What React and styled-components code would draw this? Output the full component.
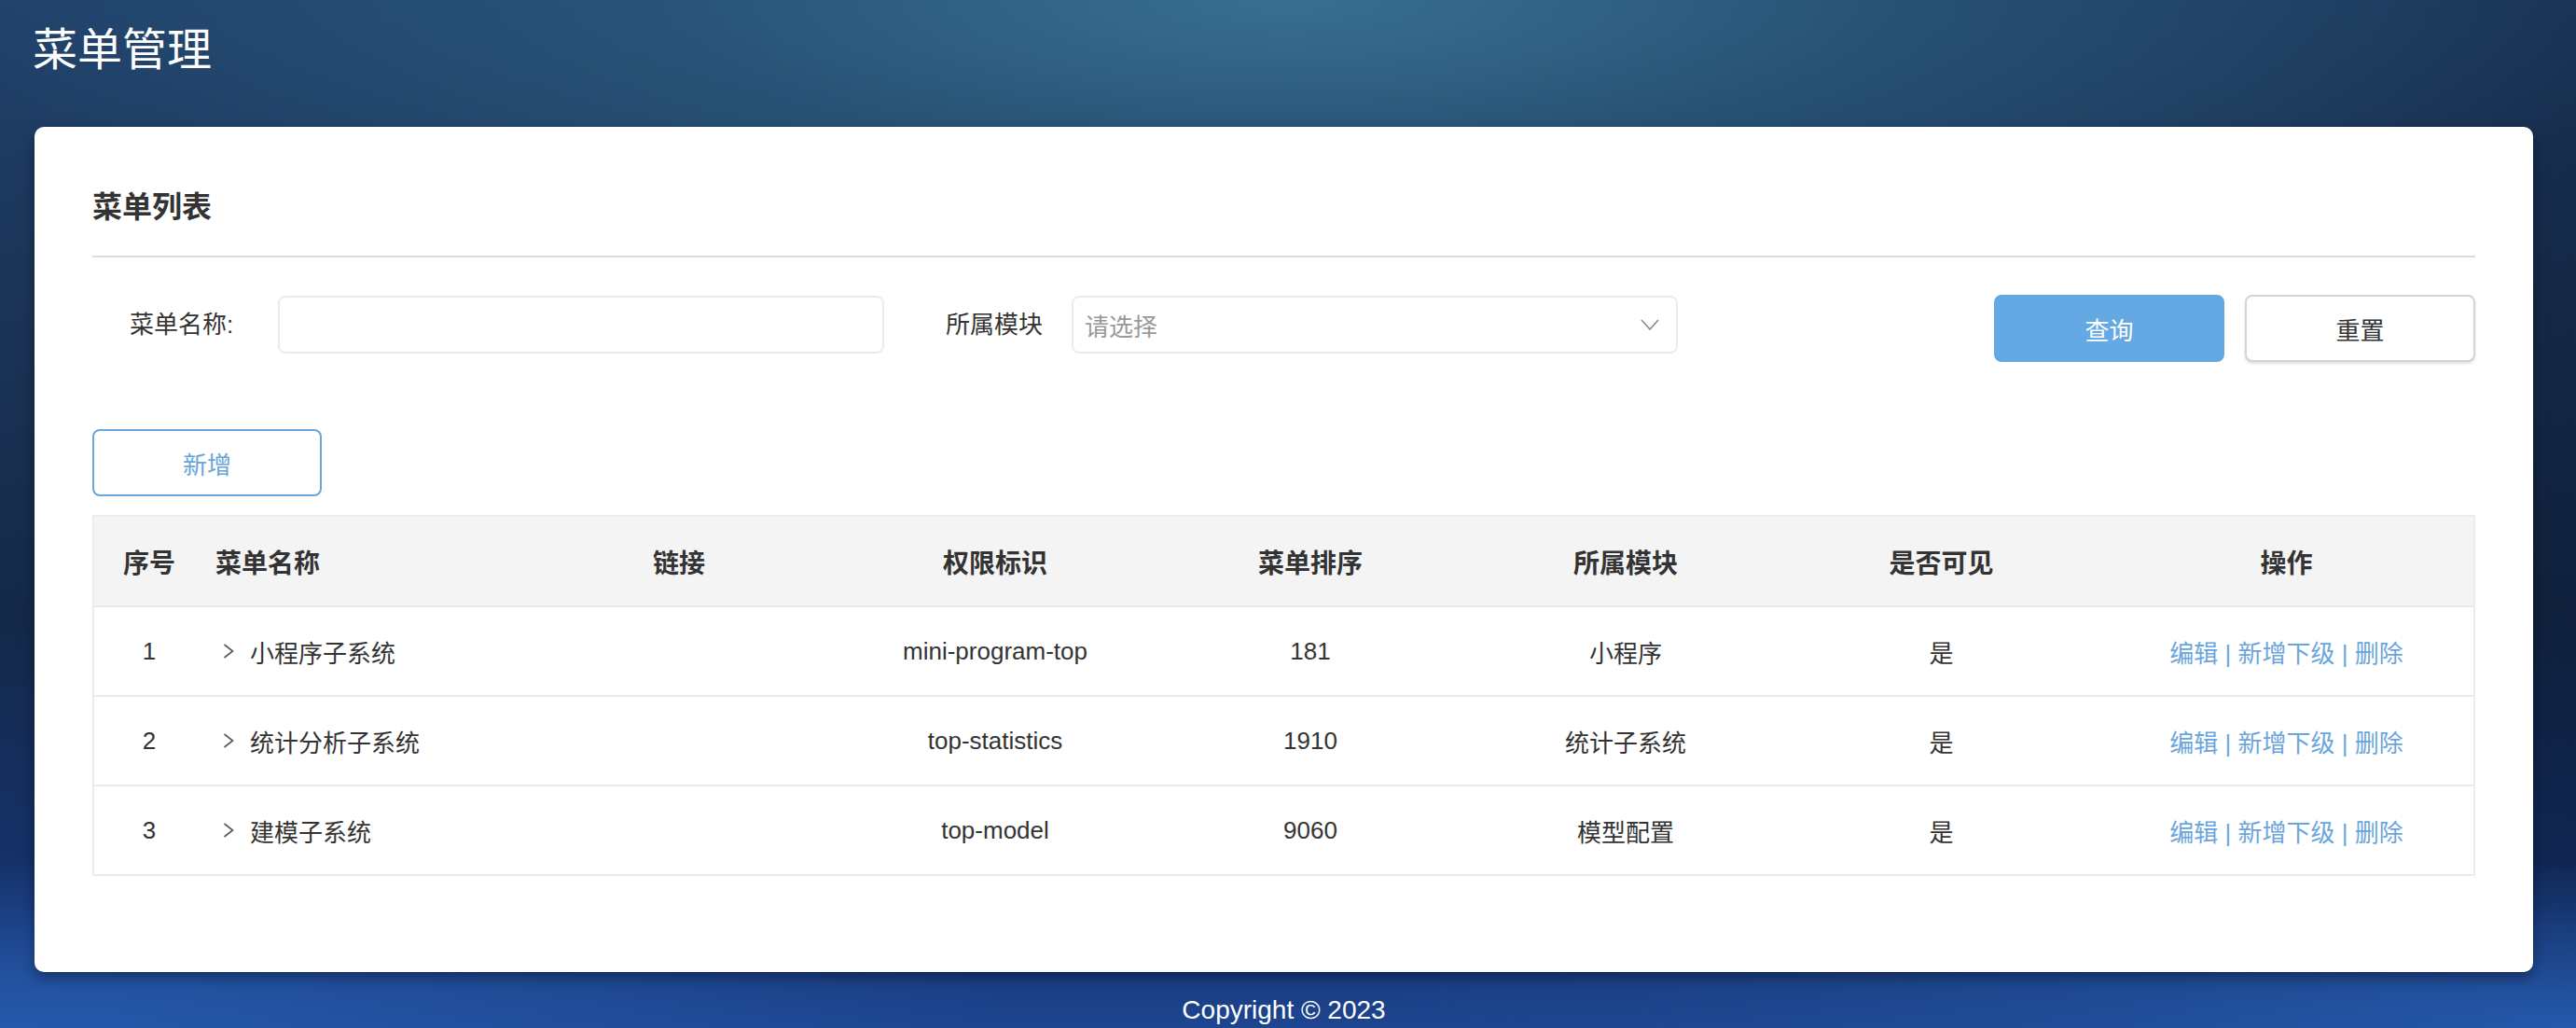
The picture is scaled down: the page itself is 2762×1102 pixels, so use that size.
import React from "react";
import styled, { createGlobalStyle } from "styled-components";

const GlobalStyle = createGlobalStyle`
  html, body {
    margin: 0;
    padding: 0;
  }
  body {
    font-family: "Liberation Sans", "Noto Sans CJK SC", sans-serif;
    overflow: hidden;
  }
`;

const Page = styled.div`
  width: 2762px;
  height: 1102px;
  display: flex;
  flex-direction: column;
  background:
    radial-gradient(ellipse 1500px 380px at 1380px 0px, rgba(58, 114, 146, 0.95) 0%, rgba(46, 96, 128, 0.6) 45%, rgba(40, 80, 110, 0) 100%),
    radial-gradient(ellipse 1100px 180px at 0px 1102px, #2659ab 0%, rgba(36, 85, 165, 0) 100%),
    radial-gradient(ellipse 1300px 180px at 2762px 1102px, #2559ac 0%, rgba(36, 85, 165, 0) 100%),
    linear-gradient(90deg, rgba(0, 0, 0, 0) 55%, rgba(5, 12, 30, 0.3) 100%),
    linear-gradient(180deg, #20406a 0%, #1b3457 30%, #142949 60%, #15326e 88%, #1d4590 100%);
`;

const TopBar = styled.header`
  flex: none;
  height: 136px;
  box-sizing: border-box;
  padding: 22px 0 0 35px;
`;

const PageTitle = styled.h1`
  margin: 0;
  font-size: 48px;
  line-height: 64px;
  font-weight: 400;
  color: #fff;
`;

const Card = styled.main`
  flex: none;
  margin-left: 37px;
  width: 2679px;
  box-sizing: border-box;
  background: #fff;
  border-radius: 10px;
  padding: 64px 62px 103px;
  box-shadow: 0 6px 14px rgba(0, 0, 0, 0.35);
`;

const CardTitle = styled.h2`
  margin: 0;
  font-size: 32px;
  line-height: 44px;
  font-weight: 600;
  color: #333;
  padding-bottom: 30px;
  border-bottom: 2px solid #dcdcdc;
`;

const FilterRow = styled.div`
  display: flex;
  align-items: flex-start;
  margin-top: 40px;
  height: 72px;
`;

const FieldLabel = styled.label`
  width: ${(p) => p.$width || "auto"};
  box-sizing: border-box;
  padding-left: ${(p) => p.$indent || "0px"};
  margin-left: ${(p) => p.$offset || "0px"};
  margin-right: ${(p) => p.$gap || "0px"};
  margin-top: 1px;
  font-size: 26px;
  line-height: 62px;
  color: #333;
  white-space: nowrap;
`;

const TextInput = styled.input`
  width: 650px;
  height: 62px;
  margin: 1px 0 0;
  box-sizing: border-box;
  border: 2px solid #ebebeb;
  border-radius: 8px;
  outline: none;
  padding: 0 12px;
  font-size: 26px;
  font-family: inherit;
`;

const SelectBox = styled.div`
  width: 650px;
  height: 62px;
  margin-top: 1px;
  box-sizing: border-box;
  border: 2px solid #ebebeb;
  border-radius: 8px;
  display: flex;
  align-items: center;
  justify-content: space-between;
  padding: 0 18px 0 12px;
  font-size: 26px;
  color: #999;
`;

const ButtonGroup = styled.div`
  margin-left: auto;
  display: flex;
  gap: 22px;
`;

const Button = styled.button`
  width: ${(p) => p.$width || "247px"};
  height: 72px;
  box-sizing: border-box;
  border-radius: 8px;
  font-family: inherit;
  font-size: 26px;
  cursor: pointer;
  background: ${(p) => (p.$variant === "primary" ? "#64a8e4" : "#fff")};
  color: ${(p) =>
    p.$variant === "primary" ? "#fff" : p.$variant === "outline" ? "#69a5dc" : "#333"};
  border: 2px solid
    ${(p) =>
      p.$variant === "primary" ? "#64a8e4" : p.$variant === "outline" ? "#69a5de" : "#d4d4d4"};
  box-shadow: ${(p) => (p.$variant === "default" ? "0 2px 3px rgba(0,0,0,0.12)" : "none")};
`;

const Toolbar = styled.div`
  margin-top: 72px;
  display: flex;
`;

const Table = styled.div`
  margin-top: 20px;
  border: 2px solid #ececec;
  border-bottom: none;
  display: grid;
  grid-template-columns: 118px 339px 340px 338px 338px 338px 339px 1fr;
`;

const HeadCell = styled.div`
  height: 95px;
  background: #f4f4f4;
  border-bottom: 2px solid #ebebeb;
  display: flex;
  align-items: center;
  justify-content: ${(p) => (p.$left ? "flex-start" : "center")};
  padding-left: ${(p) => (p.$left ? "12px" : "0")};
  font-size: 28px;
  font-weight: 600;
  color: #333;
`;

const Cell = styled.div`
  height: 94px;
  border-bottom: 2px solid #ebebeb;
  display: flex;
  align-items: center;
  justify-content: ${(p) => (p.$left ? "flex-start" : "center")};
  padding-left: ${(p) => (p.$left ? "12px" : "0")};
  font-size: 26px;
  color: #333;
  white-space: nowrap;
`;

const Expander = styled.svg`
  flex: none;
  margin-right: 17px;
`;

const Actions = styled.span`
  color: #6aa6dc;
  font-size: 26px;
  white-space: pre;
`;

const Footer = styled.footer`
  flex: none;
  margin-left: 37px;
  width: 2679px;
  margin-top: 21px;
  text-align: center;
  font-size: 28px;
  line-height: 40px;
  color: #fff;
`;

const columns = ["序号", "菜单名称", "链接", "权限标识", "菜单排序", "所属模块", "是否可见", "操作"];

const rows = [
  { id: 1, name: "小程序子系统", link: "", perm: "mini-program-top", sort: 181, module: "小程序", visible: "是" },
  { id: 2, name: "统计分析子系统", link: "", perm: "top-statistics", sort: 1910, module: "统计子系统", visible: "是" },
  { id: 3, name: "建模子系统", link: "", perm: "top-model", sort: 9060, module: "模型配置", visible: "是" },
];

const ChevronDown = () => (
  <svg width="20" height="12" viewBox="0 0 20 12" fill="none">
    <polyline points="1,1 10,11 19,1" stroke="#888" strokeWidth="1.6" />
  </svg>
);

const ChevronRight = () => (
  <Expander width="20" height="16" viewBox="0 0 20 16" fill="none">
    <polyline points="9.5,1 18.5,8 9.5,15" stroke="#555" strokeWidth="1.6" />
  </Expander>
);

export default function App() {
  return (
    <Page>
      <GlobalStyle />
      <TopBar>
        <PageTitle>菜单管理</PageTitle>
      </TopBar>
      <Card>
        <CardTitle>菜单列表</CardTitle>
        <FilterRow>
          <FieldLabel $width="199px" $indent="40px">菜单名称:</FieldLabel>
          <TextInput />
          <FieldLabel $offset="66px" $gap="31px">所属模块</FieldLabel>
          <SelectBox>
            <span>请选择</span>
            <ChevronDown />
          </SelectBox>
          <ButtonGroup>
            <Button $variant="primary">查询</Button>
            <Button $variant="default">重置</Button>
          </ButtonGroup>
        </FilterRow>
        <Toolbar>
          <Button $variant="outline" $width="246px">新增</Button>
        </Toolbar>
        <Table>
          {columns.map((c, i) => (
            <HeadCell key={c} $left={i === 1}>{c}</HeadCell>
          ))}
          {rows.map((r) => (
            <React.Fragment key={r.id}>
              <Cell>{r.id}</Cell>
              <Cell $left>
                <ChevronRight />
                {r.name}
              </Cell>
              <Cell>{r.link}</Cell>
              <Cell>{r.perm}</Cell>
              <Cell>{r.sort}</Cell>
              <Cell>{r.module}</Cell>
              <Cell>{r.visible}</Cell>
              <Cell>
                <Actions>编辑 | 新增下级 | 删除</Actions>
              </Cell>
            </React.Fragment>
          ))}
        </Table>
      </Card>
      <Footer>Copyright © 2023</Footer>
    </Page>
  );
}
